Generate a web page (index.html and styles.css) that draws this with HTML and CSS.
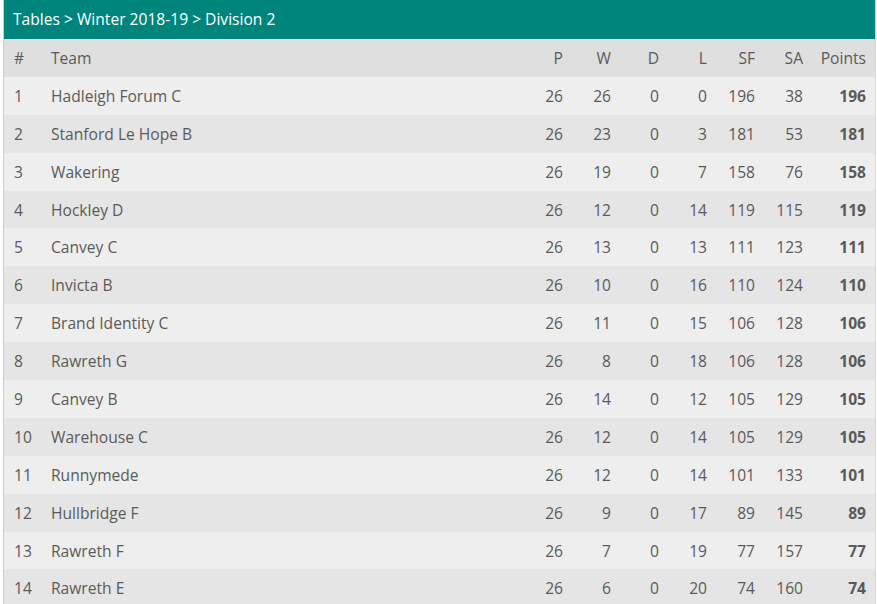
FILE: index.html
```html
<!DOCTYPE html>
<html lang="en">
<head>
  <meta charset="UTF-8">
  <title>Division 2</title>
  <link rel="stylesheet" href="styles.css">
</head>
<body>
  <div class="league">
    <div class="league-title">Tables &gt; Winter 2018-19 &gt; Division 2</div>
    <table class="standings">
      <colgroup>
        <col class="c-pos">
        <col class="c-team">
        <col class="c-num"><col class="c-num"><col class="c-num"><col class="c-num">
        <col class="c-num"><col class="c-num">
        <col class="c-pts">
      </colgroup>
      <thead>
        <tr>
          <th class="pos">#</th><th class="team">Team</th>
          <th>P</th><th>W</th><th>D</th><th>L</th><th>SF</th><th>SA</th><th class="pts">Points</th>
        </tr>
      </thead>
      <tbody>
        <tr><td class="pos">1</td><td class="team">Hadleigh Forum C</td><td>26</td><td>26</td><td>0</td><td>0</td><td>196</td><td>38</td><td class="pts">196</td></tr>
        <tr><td class="pos">2</td><td class="team">Stanford Le Hope B</td><td>26</td><td>23</td><td>0</td><td>3</td><td>181</td><td>53</td><td class="pts">181</td></tr>
        <tr><td class="pos">3</td><td class="team">Wakering</td><td>26</td><td>19</td><td>0</td><td>7</td><td>158</td><td>76</td><td class="pts">158</td></tr>
        <tr><td class="pos">4</td><td class="team">Hockley D</td><td>26</td><td>12</td><td>0</td><td>14</td><td>119</td><td>115</td><td class="pts">119</td></tr>
        <tr><td class="pos">5</td><td class="team">Canvey C</td><td>26</td><td>13</td><td>0</td><td>13</td><td>111</td><td>123</td><td class="pts">111</td></tr>
        <tr><td class="pos">6</td><td class="team">Invicta B</td><td>26</td><td>10</td><td>0</td><td>16</td><td>110</td><td>124</td><td class="pts">110</td></tr>
        <tr><td class="pos">7</td><td class="team">Brand Identity C</td><td>26</td><td>11</td><td>0</td><td>15</td><td>106</td><td>128</td><td class="pts">106</td></tr>
        <tr><td class="pos">8</td><td class="team">Rawreth G</td><td>26</td><td>8</td><td>0</td><td>18</td><td>106</td><td>128</td><td class="pts">106</td></tr>
        <tr><td class="pos">9</td><td class="team">Canvey B</td><td>26</td><td>14</td><td>0</td><td>12</td><td>105</td><td>129</td><td class="pts">105</td></tr>
        <tr><td class="pos">10</td><td class="team">Warehouse C</td><td>26</td><td>12</td><td>0</td><td>14</td><td>105</td><td>129</td><td class="pts">105</td></tr>
        <tr><td class="pos">11</td><td class="team">Runnymede</td><td>26</td><td>12</td><td>0</td><td>14</td><td>101</td><td>133</td><td class="pts">101</td></tr>
        <tr><td class="pos">12</td><td class="team">Hullbridge F</td><td>26</td><td>9</td><td>0</td><td>17</td><td>89</td><td>145</td><td class="pts">89</td></tr>
        <tr><td class="pos">13</td><td class="team">Rawreth F</td><td>26</td><td>7</td><td>0</td><td>19</td><td>77</td><td>157</td><td class="pts">77</td></tr>
        <tr><td class="pos">14</td><td class="team">Rawreth E</td><td>26</td><td>6</td><td>0</td><td>20</td><td>74</td><td>160</td><td class="pts">74</td></tr>
      </tbody>
    </table>
  </div>
</body>
</html>
```

FILE: styles.css
```css
* {
  margin: 0;
  padding: 0;
  box-sizing: border-box;
}

body {
  font-family: "Open Sans", "Liberation Sans", sans-serif;
  font-size: 15.6px;
  color: #5a5a5a;
  background-color: #fff;
  padding-left: 3px;
}

.league {
  width: 873px;
  border-left: 1px solid #cfcfcf;
  border-right: 1px solid #d8d8d8;
}

.league-title {
  height: 39px;
  line-height: 39px;
  padding-left: 9px;
  background-color: #00857d;
  color: #fff;
}

.standings {
  width: 100%;
  border-collapse: collapse;
  table-layout: fixed;
}

.c-pos { width: 36px; }
.c-num { width: 48px; }
.c-pts { width: 64px; }

.standings th,
.standings td {
  height: 37.9px;
  padding: 0 8px 0 0;
  text-align: right;
  font-weight: normal;
  white-space: nowrap;
}

.standings .pos {
  text-align: left;
  padding-left: 10px;
}

.standings .team {
  text-align: left;
  padding-left: 11px;
}

.standings .pts {
  padding-right: 9px;
}

.standings td.pts {
  font-weight: bold;
}

.standings thead tr {
  background-color: #dfdfdf;
}

.standings tbody tr:nth-child(odd) {
  background-color: #eeeeee;
}

.standings tbody tr:nth-child(even) {
  background-color: #e5e5e5;
}
```
